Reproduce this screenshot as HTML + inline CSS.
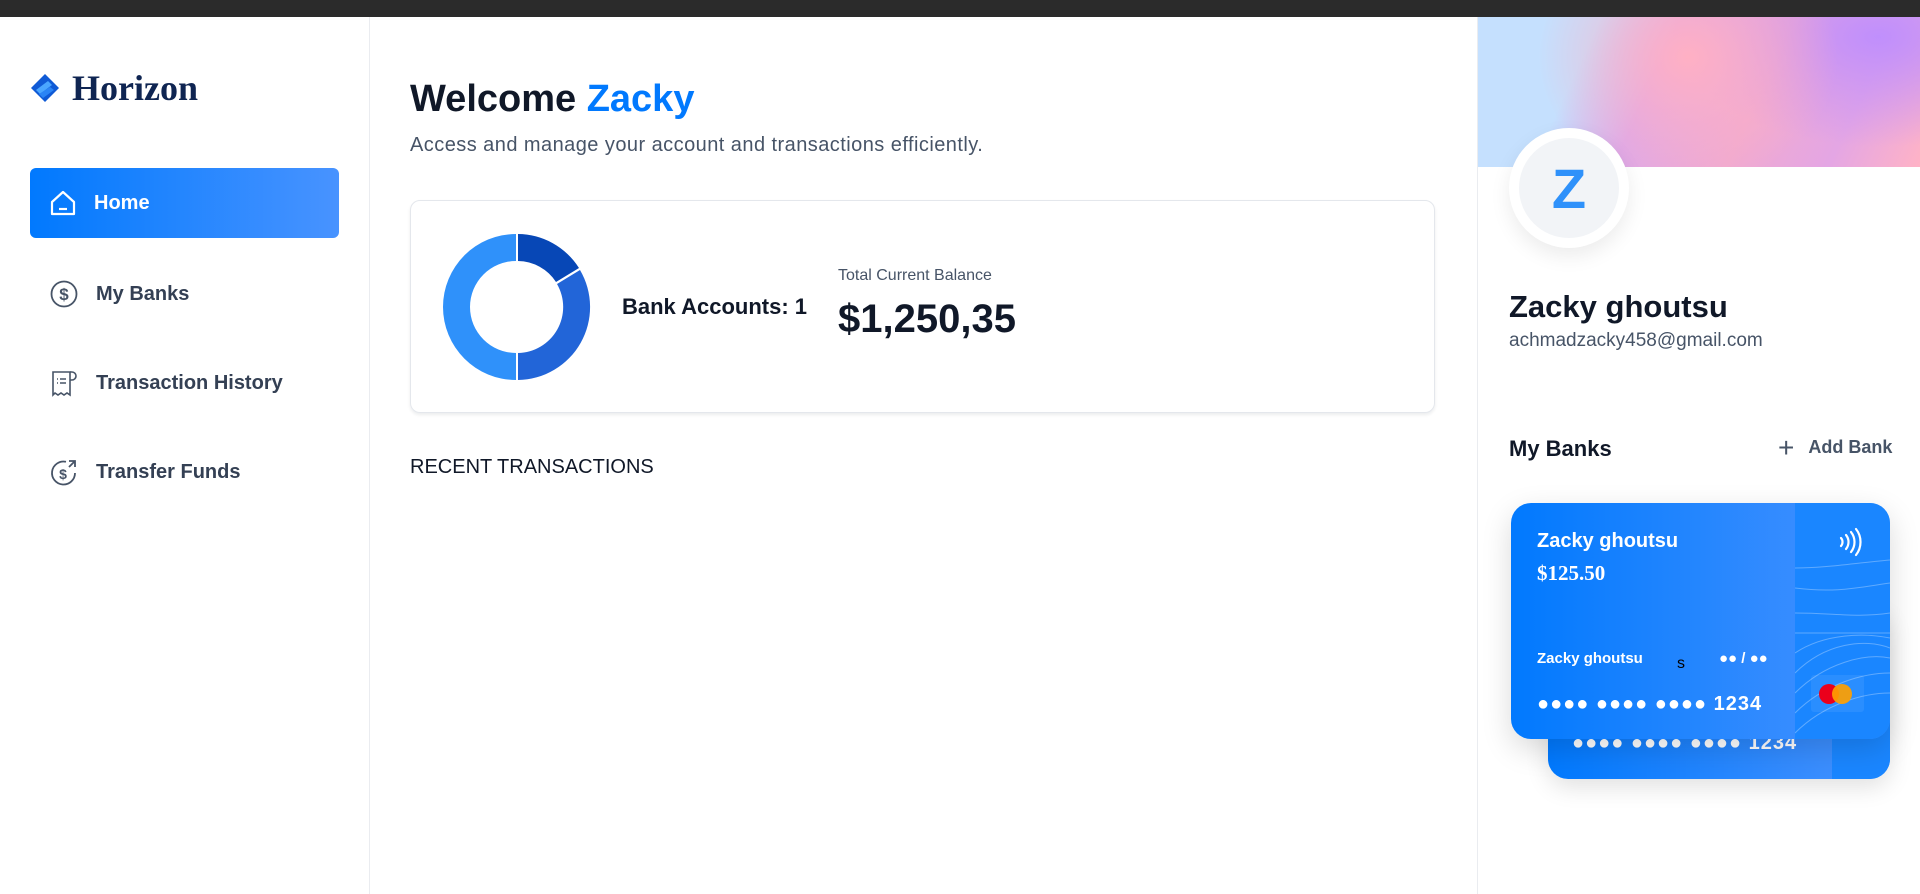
<!DOCTYPE html>
<html><head><meta charset="utf-8"><style>
*{margin:0;padding:0;box-sizing:border-box}
body{width:1920px;height:894px;overflow:hidden;background:#fff;font-family:"Liberation Sans",sans-serif;position:relative;color:#101828}
.top{position:absolute;left:0;top:0;width:1920px;height:17px;background:#2b2b2b}
.side{position:absolute;left:0;top:17px;width:370px;height:877px;border-right:1px solid #eaecf0}
.logo{position:absolute;left:30px;top:50px;display:flex;align-items:center;gap:12px}
.logo span{font-family:"Liberation Serif",serif;font-weight:bold;font-size:36px;color:#0f2552}
.nav{position:absolute;left:30px;width:309px;height:70px;display:flex;align-items:center;padding-left:20px;gap:18px;font-size:20px;font-weight:bold;color:#344054;border-radius:6px}
.nav.act{background:linear-gradient(90deg,#0179fe,#4893ff);color:#fff}
.main{position:absolute;left:410px;top:0}
.right{position:absolute;left:1477px;top:17px;width:443px;height:877px;border-left:1px solid #eaecf0}
.banner{height:150px;background:radial-gradient(ellipse 150px 130px at 210px 40px,#ffb0c4 0%,rgba(255,176,196,0) 100%),radial-gradient(ellipse 200px 110px at 400px 20px,#c08ffc 0%,rgba(192,143,252,0) 100%),linear-gradient(115deg,#c5e0fe 0%,#c5e0fe 24%,#dca8ea 40%,#f0aad0 62%,#e4a6e4 82%,#ffb3c6 100%)}
</style></head><body>
<div class="top"></div>
<div class="side">
 <div class="logo"><svg width="30" height="30" viewBox="0 0 30 30"><path d="M15 1 L29 15 L15 29 L1 15Z" fill="#0f5ad6"/><path d="M6 17 L18 8 L22 12 L10 21Z" fill="#4aa6ff"/><path d="M9 21 L20 14 L24 17 L13 25Z" fill="#2a84f5"/></svg><span>Horizon</span></div>
 <div class="nav act" style="top:151px"><svg width="26" height="26" viewBox="0 0 26 26" fill="none" stroke="#fff" stroke-width="2.2"><path d="M2 12 L13 2 L24 12 V24 H2Z" stroke-linejoin="round"/><path d="M9 19h8"/></svg>Home</div>
 <div class="nav" style="top:242px"><svg width="28" height="28" viewBox="0 0 28 28" fill="none" stroke="#475467" stroke-width="1.8"><circle cx="14" cy="14" r="12.5"/><text x="14" y="20" text-anchor="middle" font-size="17" fill="#475467" stroke="none" font-family="Liberation Sans">$</text></svg>My Banks</div>
 <div class="nav" style="top:331px"><svg width="28" height="28" viewBox="0 0 28 28" fill="none" stroke="#475467" stroke-width="1.6"><path d="M3 3h17v23l-3-2-3 2-3-2-3 2-3-2-2 2Z"/><path d="M20 3h2a4 4 0 0 1 0 8h-2M7 10h1M10 10h6M7 14h1M10 14h6"/></svg>Transaction History</div>
 <div class="nav" style="top:420px"><svg width="28" height="28" viewBox="0 0 28 28" fill="none" stroke="#475467" stroke-width="1.8"><path d="M25 15a11.5 11.5 0 1 1-9-11.2"/><path d="M19 3h6v6M25 3l-6 6"/><text x="13" y="21" text-anchor="middle" font-size="14" fill="#475467" stroke="none" font-family="Liberation Sans">$</text></svg>Transfer Funds</div>
</div>
<div class="main">
 <div style="position:absolute;top:78px;font-size:38px;font-weight:bold;white-space:nowrap;color:#101828">Welcome <span style="color:#0179fe">Zacky</span></div>
 <div style="position:absolute;top:134px;font-size:20px;letter-spacing:0.45px;color:#475467;white-space:nowrap">Access and manage your account and transactions efficiently.</div>
 <div style="position:absolute;top:200px;width:1025px;height:213px;border:1px solid #e4e7ec;border-radius:10px;box-shadow:0 2px 3px rgba(16,24,40,.08)">
  <svg style="position:absolute;left:32px;top:32px" width="148" height="148" viewBox="0 0 148 148">
   <g transform="translate(74,74)">
    <path d="M1 -73 A73 73 0 0 1 62 -39 L39 -25 A46 46 0 0 0 1 -46Z" fill="#0747b6"/>
    <path d="M63 -37 A73 73 0 0 1 1 73 L1 46 A46 46 0 0 0 40 -23Z" fill="#2265d8"/>
    <path d="M-1 73 A73 73 0 0 1 -1 -73 L-1 -46 A46 46 0 0 0 -1 46Z" fill="#2f91fa"/>
   </g></svg>
  <div style="position:absolute;left:211px;top:93px;font-size:22px;font-weight:bold;color:#101828">Bank Accounts: 1</div>
  <div style="position:absolute;left:427px;top:66px;font-size:16px;color:#475467">Total Current Balance</div>
  <div style="position:absolute;left:427px;top:96px;font-size:40px;font-weight:bold;color:#101828">$1,250,35</div>
 </div>
 <div style="position:absolute;top:456px;font-size:20px;color:#101828;white-space:nowrap">RECENT TRANSACTIONS</div>
</div>
<div class="right">
 <div class="banner"></div>
 <div style="position:absolute;left:31px;top:111px;width:120px;height:120px;border-radius:50%;background:#fff;box-shadow:0 8px 20px rgba(0,0,0,.08);display:flex;align-items:center;justify-content:center"><div style="width:100px;height:100px;border-radius:50%;background:#f2f4f7;display:flex;align-items:center;justify-content:center;font-size:56px;font-weight:bold;color:#2f91fa">Z</div></div>
 <div style="position:absolute;left:31px;top:272px;font-size:31px;font-weight:bold;color:#101828;white-space:nowrap">Zacky ghoutsu</div>
 <div style="position:absolute;left:31px;top:313px;font-size:19px;color:#475467">achmadzacky458@gmail.com</div>
 <div style="position:absolute;left:31px;top:419px;font-size:22px;font-weight:bold;color:#101828">My Banks</div>
 <div style="position:absolute;left:300px;top:420px;font-size:18px;font-weight:bold;color:#475467;display:flex;align-items:center;gap:14px"><span style="font-size:28px;font-weight:normal;line-height:20px">+</span>Add Bank</div>
 <div style="position:absolute;left:70px;top:590px;width:342px;height:172px;border-radius:20px;overflow:hidden;background:linear-gradient(90deg,#0179fe,#4893ff);box-shadow:0 8px 24px rgba(0,0,0,.12)">
  <div style="position:absolute;right:0;top:0;width:58px;height:100%;background:#1a86ff"></div>
  <div style="position:absolute;left:24px;bottom:24px;color:#fff;font-size:20px;font-weight:bold;letter-spacing:1px">●●●● ●●●● ●●●● 1234</div>
 </div>
 <div style="position:absolute;left:33px;top:486px;width:379px;height:236px;border-radius:20px;overflow:hidden;background:linear-gradient(90deg,#0179fe,#4893ff);box-shadow:0 10px 30px rgba(0,0,0,.15);color:#fff">
  <div style="position:absolute;left:284px;top:0;width:95px;height:100%;background:#1a86ff"></div>
  <svg style="position:absolute;left:284px;top:55px" width="95" height="180" fill="none" stroke="rgba(255,255,255,.3)" stroke-width="1"><path d="M0 10c30 0 60-5 95-8M0 30c40 5 60 0 95 -5M0 55c40 0 60 5 95 0M0 75c40 0 60 0 95 0M0 95c30-20 70-20 95-15M0 115c30-30 70-35 95-25M0 135c30-30 70-40 95-35M0 155c30-30 70-40 95-40M0 175c30-30 70-40 95-40"/></svg>
  <div style="position:absolute;left:26px;top:27px;font-size:20px;font-weight:bold">Zacky ghoutsu</div>
  <div style="position:absolute;left:26px;top:58px;font-size:21px;font-weight:bold;font-family:'Liberation Serif',serif">$125.50</div>
  <svg style="position:absolute;left:327px;top:24px" width="26" height="30" fill="none" stroke="#fff" stroke-width="2.2" stroke-linecap="round"><path d="M3 11a6 6 0 0 1 0 8M8 8a11 11 0 0 1 0 14M13 5a16 16 0 0 1 0 20M18 2a21 21 0 0 1 0 26"/></svg>
  <div style="position:absolute;left:26px;top:147px;font-size:15px;font-weight:bold">Zacky ghoutsu</div>
  <div style="position:absolute;left:166px;top:152px;font-size:16px;color:#000">s</div>
  <div style="position:absolute;left:208px;top:147px;font-size:15px;font-weight:bold">●● / ●●</div>
  <div style="position:absolute;left:26px;top:190px;font-size:20px;font-weight:bold;letter-spacing:1px">●●●● ●●●● ●●●● 1234</div>
  <div style="position:absolute;left:300px;top:172px;width:53px;height:37px;background:rgba(255,255,255,.07);border-radius:3px"></div>
  <div style="position:absolute;left:308px;top:181px;width:20px;height:20px;border-radius:50%;background:#eb001b"></div>
  <div style="position:absolute;left:321px;top:181px;width:20px;height:20px;border-radius:50%;background:rgba(255,159,0,.92)"></div>
 </div>
</div>
</body></html>
